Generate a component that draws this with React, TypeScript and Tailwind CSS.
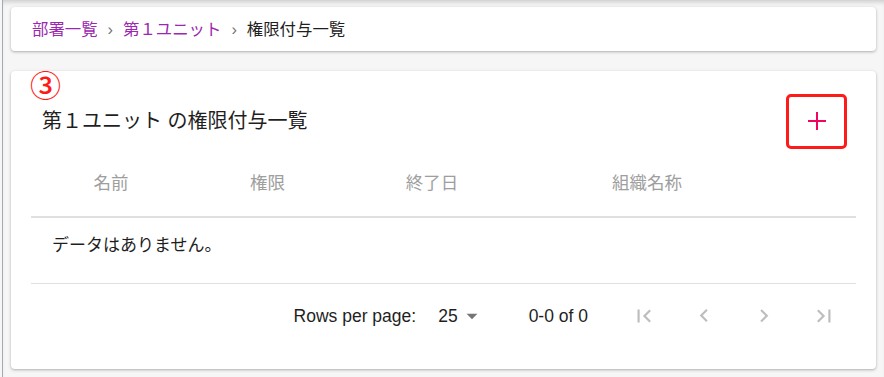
import React from "react";

const FONT = '"Liberation Sans", "Noto Sans CJK JP", sans-serif';

function Icon({ d, className }: { d: string; className?: string }) {
  return (
    <svg viewBox="0 0 24 24" className={className} fill="currentColor">
      <path d={d} />
    </svg>
  );
}

export default function App() {
  const headers = [
    { label: "名前", w: "w-[160px]" },
    { label: "権限", w: "w-[153px]" },
    { label: "終了日", w: "w-[176px]" },
    { label: "組織名称", w: "w-[254px]" },
  ];

  return (
    <div
      className="min-h-screen bg-[#f6f6f6] pl-[2px]"
      style={{ fontFamily: FONT }}
    >
      <div className="min-h-screen border-l border-[#a3aab2] px-2 pt-[7px] shadow-[inset_0_5px_5px_-3px_rgba(0,0,0,0.18)]">
        {/* breadcrumb */}
        <div className="flex h-[44px] items-center rounded-[4px] bg-white pl-[21px] text-[16.4px] shadow-[0_1px_3px_rgba(0,0,0,0.3)]">
          <span className="text-[#9c27b0]">部署一覧</span>
          <span className="mx-[10px] text-[#757575]">›</span>
          <span className="text-[#9c27b0]">第１ユニット</span>
          <span className="mx-[10px] text-[#757575]">›</span>
          <span className="text-[#1f1f1f]">権限付与一覧</span>
        </div>

        {/* list card */}
        <div className="relative mt-[20px] h-[298px] rounded-[4px] bg-white px-5 shadow-[0_1px_3px_rgba(0,0,0,0.3)]">
          <span className="absolute left-[19px] top-[0px] text-[31px] font-medium leading-none text-[#ff1a1a]">
            ③
          </span>

          <div className="flex h-[78px] items-center justify-between pt-[22px]">
            <h2 className="pl-[11px] text-[20px] font-normal text-[#1f1f1f]">
              第１ユニット の権限付与一覧
            </h2>
            <button className="mr-[9px] flex h-[55px] w-[61px] items-center justify-center rounded-[5px] border-[3px] border-[#ff1a1a]">
              <svg viewBox="0 0 20 20" className="h-[20px] w-[20px]">
                <path
                  d="M10 1v18M1 10h18"
                  stroke="#f0065f"
                  strokeWidth="2"
                  fill="none"
                />
              </svg>
            </button>
          </div>

          {/* header */}
          <div className="flex h-[69px] items-start border-b-2 border-[#e0e0e0] pt-[21px] text-[17.5px] text-[#9e9e9e]">
            {headers.map((h) => (
              <div key={h.label} className={`${h.w} text-center`}>
                {h.label}
              </div>
            ))}
          </div>

          {/* empty row */}
          <div className="h-[66px] border-b border-[#e0e0e0] pl-[21px] pt-[16px] text-[17px] leading-[24px] text-[#1f1f1f]">
            データはありません。
          </div>

          {/* pagination */}
          <div className="flex h-[64px] items-center justify-end pr-[8px] text-[17.5px] text-[#1f1f1f]">
            <span>Rows per page:</span>
            <div className="ml-[22px] flex items-center">
              <span>25</span>
              <Icon d="M7 10l5 5 5-5z" className="ml-[1px] h-[26px] w-[26px] text-[#757575]" />
            </div>
            <span className="ml-[44px]">0-0 of 0</span>
            <div className="ml-[32px] flex gap-[12px] text-[#bdbdbd]">
              <div className="flex h-[48px] w-[48px] items-center justify-center">
                <Icon d="M18.41 16.59L13.82 12l4.59-4.59L17 6l-6 6 6 6zM6 6h2v12H6z" className="h-[26px] w-[26px]" />
              </div>
              <div className="flex h-[48px] w-[48px] items-center justify-center">
                <Icon d="M15.41 16.09l-4.58-4.59 4.58-4.59L14 5.5l-6 6 6 6z" className="h-[26px] w-[26px]" />
              </div>
              <div className="flex h-[48px] w-[48px] items-center justify-center">
                <Icon d="M8.59 16.34l4.58-4.59-4.58-4.59L10 5.75l6 6-6 6z" className="h-[26px] w-[26px]" />
              </div>
              <div className="flex h-[48px] w-[48px] items-center justify-center">
                <Icon d="M5.59 7.41L10.18 12l-4.59 4.59L7 18l6-6-6-6zM16 6h2v12h-2z" className="h-[26px] w-[26px]" />
              </div>
            </div>
          </div>
        </div>
      </div>
    </div>
  );
}
